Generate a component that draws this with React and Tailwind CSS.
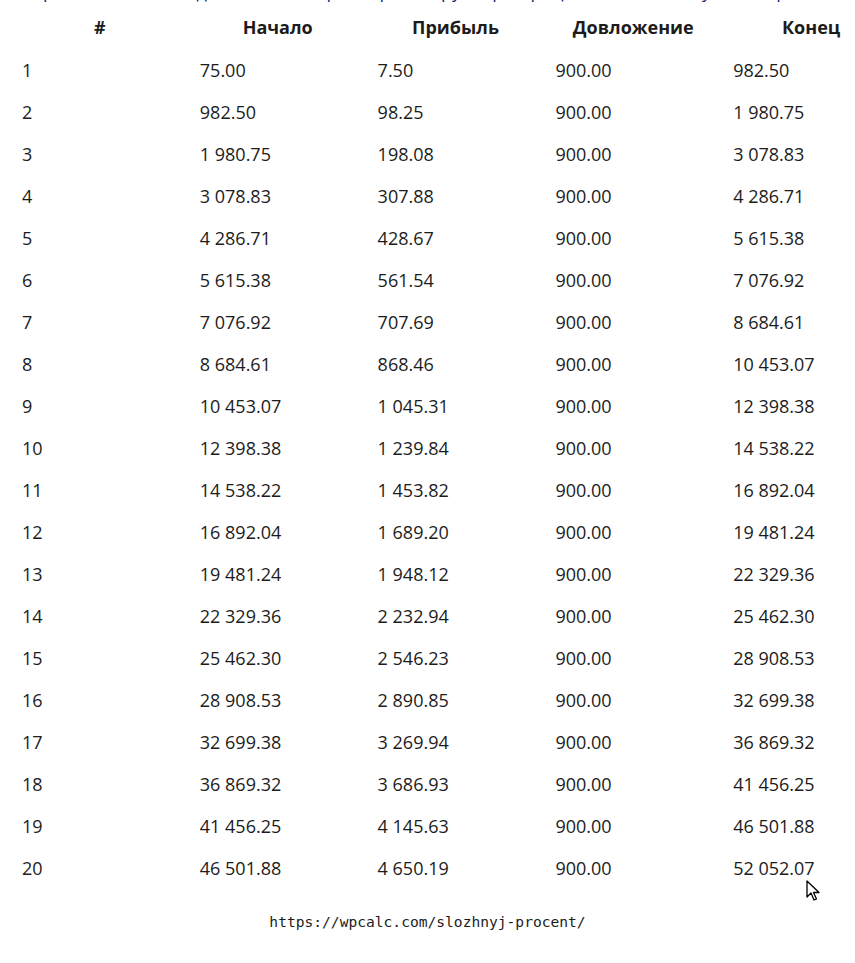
import React from "react";

const rows = [
  ["1", "75.00", "7.50", "900.00", "982.50"],
  ["2", "982.50", "98.25", "900.00", "1 980.75"],
  ["3", "1 980.75", "198.08", "900.00", "3 078.83"],
  ["4", "3 078.83", "307.88", "900.00", "4 286.71"],
  ["5", "4 286.71", "428.67", "900.00", "5 615.38"],
  ["6", "5 615.38", "561.54", "900.00", "7 076.92"],
  ["7", "7 076.92", "707.69", "900.00", "8 684.61"],
  ["8", "8 684.61", "868.46", "900.00", "10 453.07"],
  ["9", "10 453.07", "1 045.31", "900.00", "12 398.38"],
  ["10", "12 398.38", "1 239.84", "900.00", "14 538.22"],
  ["11", "14 538.22", "1 453.82", "900.00", "16 892.04"],
  ["12", "16 892.04", "1 689.20", "900.00", "19 481.24"],
  ["13", "19 481.24", "1 948.12", "900.00", "22 329.36"],
  ["14", "22 329.36", "2 232.94", "900.00", "25 462.30"],
  ["15", "25 462.30", "2 546.23", "900.00", "28 908.53"],
  ["16", "28 908.53", "2 890.85", "900.00", "32 699.38"],
  ["17", "32 699.38", "3 269.94", "900.00", "36 869.32"],
  ["18", "36 869.32", "3 686.93", "900.00", "41 456.25"],
  ["19", "41 456.25", "4 145.63", "900.00", "46 501.88"],
  ["20", "46 501.88", "4 650.19", "900.00", "52 052.07"],
];

const headers = ["#", "Начало", "Прибыль", "Довложение", "Конец"];

const App = () => {
  return (
    <div
      className="relative min-h-[963px] w-[855px] overflow-hidden bg-white text-[#1c1c1c]"
      style={{ fontFamily: '"Open Sans", sans-serif' }}
    >
      {/* cut-off line of text above the table */}
      <div className="h-[3px] overflow-hidden">
        <p className="-mt-[19px] whitespace-nowrap pl-[30px] text-[18px] leading-[21px] text-[#1a237e]">
          При ежемесячном довложении в размере 900 руб. при процентной ставке сумма вырастет через 20 периодов
        </p>
      </div>

      {/* header */}
      <div className="grid h-[46px] grid-cols-[repeat(5,177.8px)] pt-[3px]">
        {headers.map((h) => (
          <div
            key={h}
            className="flex items-center justify-center pl-[22px] text-[18px] font-bold"
          >
            {h}
          </div>
        ))}
      </div>

      {/* rows */}
      {rows.map((r) => (
        <div key={r[0]} className="grid h-[42px] grid-cols-[repeat(5,177.8px)]">
          {r.map((c, i) => (
            <div
              key={i}
              className="flex items-center pl-[22px] text-[18px] leading-[42px] whitespace-nowrap"
            >
              {c}
            </div>
          ))}
        </div>
      ))}

      <div
        className="mt-[23px] text-center text-[14.6px] leading-[20px] text-[#1c1c1c]"
        style={{ fontFamily: '"DejaVu Sans Mono", monospace' }}
      >
        https://wpcalc.com/slozhnyj-procent/
      </div>

      {/* mouse cursor */}
      <svg
        className="absolute left-[806px] top-[880px]"
        width="14"
        height="22"
        viewBox="0 0 14 22"
      >
        <path
          d="M1 1 L1 17 L5 13 L8 20 L10.5 19 L7.5 12.5 L13 12.5 Z"
          fill="white"
          stroke="black"
          strokeWidth="1.3"
          strokeLinejoin="round"
        />
      </svg>
    </div>
  );
};

export default App;
